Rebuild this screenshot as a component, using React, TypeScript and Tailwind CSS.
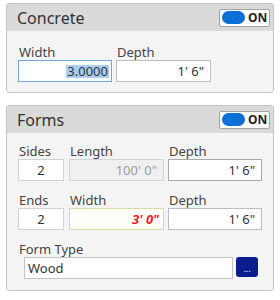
import React from "react";

function Toggle() {
  return (
    <div className="w-[51px] h-[18px] border border-[#a3a3a3] bg-white rounded-[2px] flex items-center pl-[2px] gap-[3px]">
      <div className="w-[23px] h-[13px] rounded-full bg-[#0b6fd6]" />
      <span className="text-[12px] font-bold text-[#222] leading-none">ON</span>
    </div>
  );
}

function Header({ title }: { title: string }) {
  return (
    <div className="h-[27px] bg-[#dadada] flex items-center justify-between pl-[10px] pr-[3px]">
      <span className="text-[16px] text-[#333] leading-none">{title}</span>
      <Toggle />
    </div>
  );
}

function Field({ label, width, children }: { label: string; width: string; children: React.ReactNode }) {
  return (
    <div className={`flex flex-col ${width}`}>
      <span className="text-[13px] text-[#444] leading-[16px] pl-[1px]">{label}</span>
      {children}
    </div>
  );
}

const box = "h-[22px] border bg-white flex items-center text-[13px] leading-none";

export default function App() {
  return (
    <div className="w-[280px] h-[300px] bg-white pt-[3px] px-[6px] flex flex-col gap-[12px] font-['Noto_Sans',sans-serif]">
      <div className="border border-[#c4c4c4] rounded-[3px] bg-[#f4f4f4] overflow-hidden">
        <Header title="Concrete" />
        <div className="flex gap-[4px] pl-[11px] pt-[13px] pb-[10px]">
          <Field label="Width" width="w-[94px]">
            <div className={`${box} border-[#6fa6dc] justify-end pr-[2px]`}>
              <span className="bg-[#a8cdf0] text-[#333] px-[1px]">3.0000</span>
            </div>
          </Field>
          <Field label="Depth" width="w-[95px]">
            <div className={`${box} border-[#bdbdbd] justify-end pr-[6px] text-[#333]`}>1' 6"</div>
          </Field>
        </div>
      </div>

      <div className="border border-[#c4c4c4] rounded-[3px] bg-[#f4f4f4] overflow-hidden">
        <Header title="Forms" />
        <div className="flex flex-col pl-[11px] pt-[10px] pb-[11px] gap-[11px]">
          <div className="flex">
            <Field label="Sides" width="w-[46px] mr-[5px]">
              <div className={`${box} border-[#d2d2d2] justify-center text-[#333]`}>2</div>
            </Field>
            <Field label="Length" width="w-[95px] mr-[4px]">
              <div className={`${box} border-[#d4d4d4] !bg-[#f0f0f0] justify-end pr-[6px] text-[#9b9b9b]`}>100' 0"</div>
            </Field>
            <Field label="Depth" width="w-[94px]">
              <div className={`${box} border-[#a9a9a9] justify-end pr-[6px] text-[#333]`}>1' 6"</div>
            </Field>
          </div>
          <div className="flex">
            <Field label="Ends" width="w-[46px] mr-[5px]">
              <div className={`${box} border-[#d2d2d2] justify-center text-[#333]`}>2</div>
            </Field>
            <Field label="Width" width="w-[95px] mr-[4px]">
              <div className={`${box} border-[#d9d9a6] !bg-[#fffffa] justify-end pr-[4px] text-[#ee1c25] font-bold italic`}>3' 0"</div>
            </Field>
            <Field label="Depth" width="w-[94px]">
              <div className={`${box} border-[#bdbdbd] justify-end pr-[6px] text-[#333]`}>1' 6"</div>
            </Field>
          </div>
          <div className="flex flex-col">
            <span className="text-[13px] text-[#444] leading-[16px] pl-[1px]">Form Type</span>
            <div className="flex items-start pl-[6px] gap-[3px]">
              <div className={`${box} w-[209px] border-[#c4c4c4] pl-[3px] text-[#333]`}>Wood</div>
              <div className="w-[22px] h-[20px] rounded-[3px] bg-[#0b1c8c] flex items-end justify-center pb-[4px]">
                <span className="text-[9px] text-white leading-none">...</span>
              </div>
            </div>
          </div>
        </div>
      </div>
    </div>
  );
}
